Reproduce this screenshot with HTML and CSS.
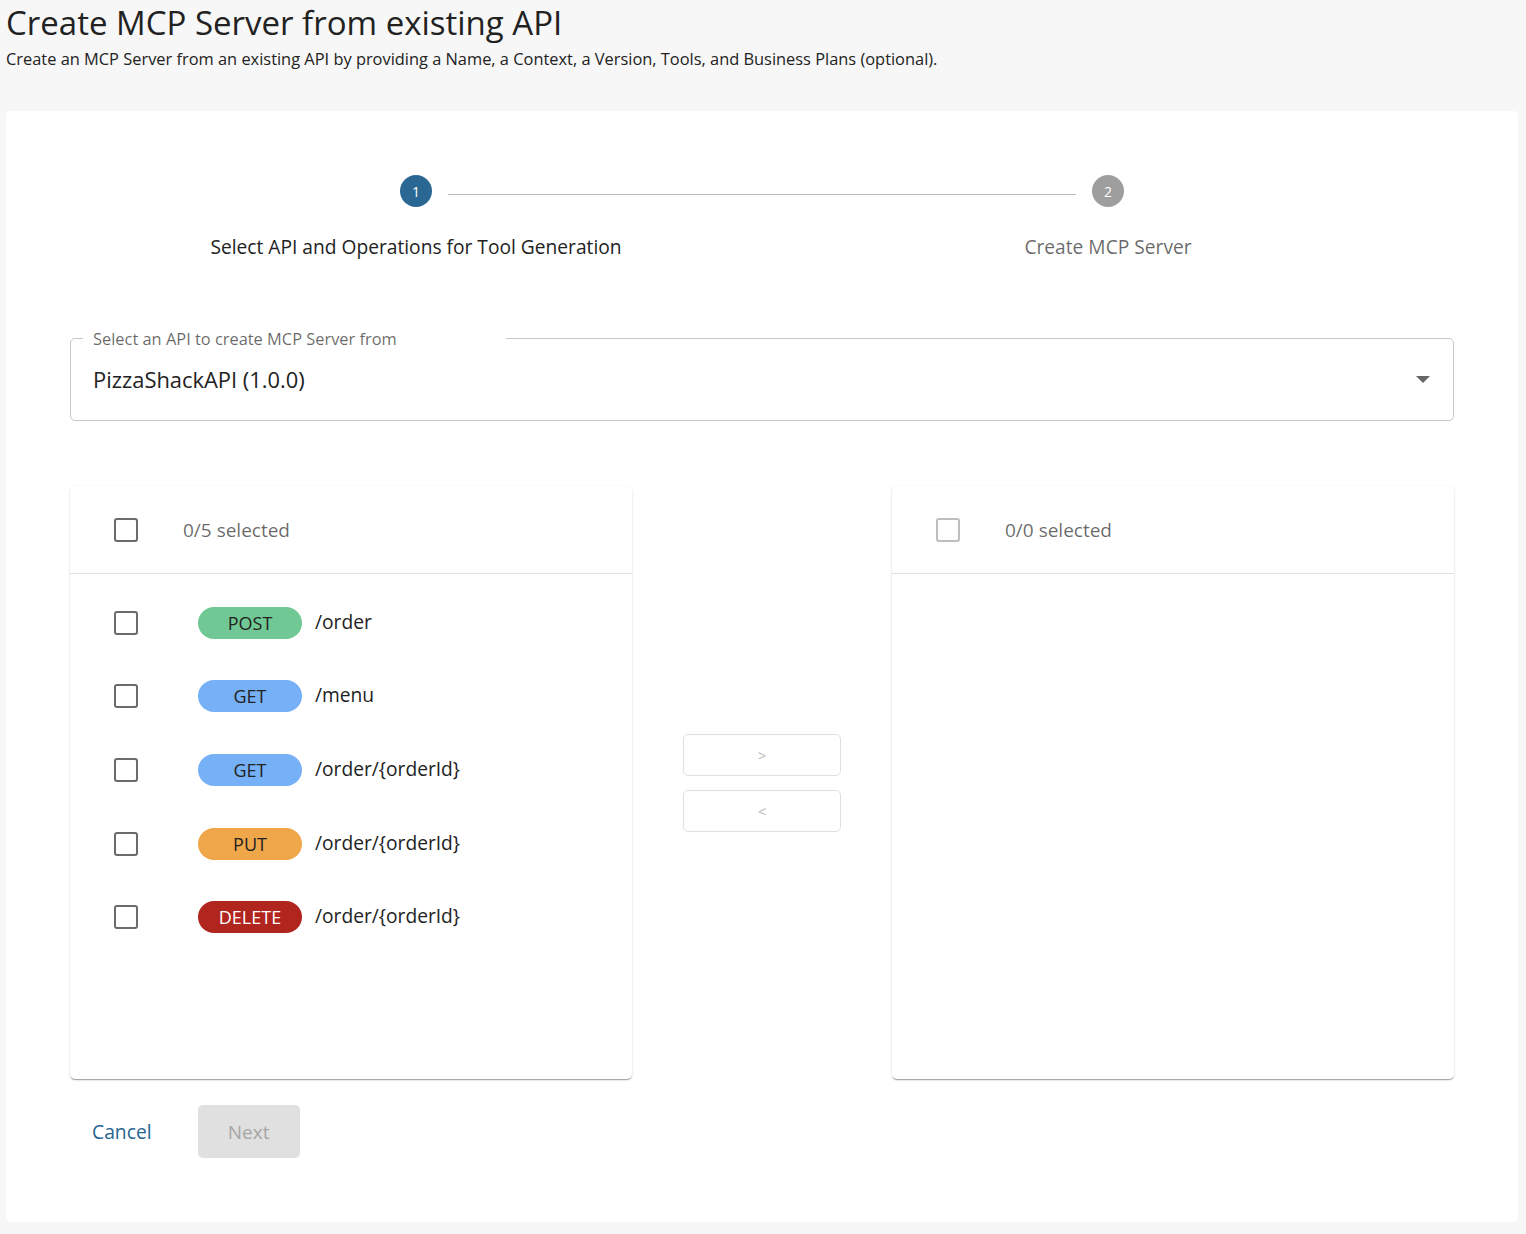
FILE: index.html
```html
<!DOCTYPE html>
<html lang="en">
<head>
<meta charset="utf-8">
<title>Create MCP Server from existing API</title>
<link rel="stylesheet" href="styles.css">
</head>
<body>
<div class="page">
  <header class="page-header">
    <h1 class="title">Create MCP Server from existing API</h1>
    <p class="subtitle">Create an MCP Server from an existing API by providing a Name, a Context, a Version, Tools, and Business Plans (optional).</p>
  </header>

  <main class="card">
    <div class="stepper">
      <div class="step active">
        <div class="step-head">
          <span class="line line-left"></span>
          <span class="step-icon">1</span>
          <span class="line line-right"></span>
        </div>
        <div class="step-label">Select API and Operations for Tool Generation</div>
      </div>
      <div class="step">
        <div class="step-head">
          <span class="line line-left"></span>
          <span class="step-icon">2</span>
          <span class="line line-right hidden"></span>
        </div>
        <div class="step-label">Create MCP Server</div>
      </div>
    </div>

    <div class="select-field">
      <span class="notch"><span class="notch-text">Select an API to create MCP Server from</span></span>
      <span class="select-value">PizzaShackAPI (1.0.0)</span>
      <svg class="select-arrow" viewBox="7 10 10 5" width="14" height="7" aria-hidden="true"><path d="M7 10l5 5 5-5z" fill="#666"/></svg>
    </div>

    <div class="transfer">
      <section class="panel">
        <div class="panel-header">
          <span class="checkbox"></span>
          <span class="count">0/5 selected</span>
        </div>
        <ul class="op-list">
          <li class="op"><span class="checkbox"></span><span class="badge post">POST</span><span class="path">/order</span></li>
          <li class="op"><span class="checkbox"></span><span class="badge get">GET</span><span class="path">/menu</span></li>
          <li class="op"><span class="checkbox"></span><span class="badge get">GET</span><span class="path">/order/{orderId}</span></li>
          <li class="op"><span class="checkbox"></span><span class="badge put">PUT</span><span class="path">/order/{orderId}</span></li>
          <li class="op"><span class="checkbox"></span><span class="badge delete">DELETE</span><span class="path">/order/{orderId}</span></li>
        </ul>
      </section>

      <div class="move-buttons">
        <button class="move-btn" disabled>&gt;</button>
        <button class="move-btn" disabled>&lt;</button>
      </div>

      <section class="panel">
        <div class="panel-header">
          <span class="checkbox disabled"></span>
          <span class="count">0/0 selected</span>
        </div>
        <ul class="op-list"></ul>
      </section>
    </div>

    <div class="actions">
      <button class="btn-text">Cancel</button>
      <button class="btn-next" disabled>Next</button>
    </div>
  </main>
</div>
</body>
</html>
```

FILE: styles.css
```css
* { box-sizing: border-box; }

html, body {
  margin: 0;
  padding: 0;
  background: #f7f7f7;
}

body {
  font-family: "Open Sans", "Noto Sans", "Liberation Sans", sans-serif;
  color: rgba(0, 0, 0, 0.87);
}

.page {
  padding: 0 8px 12px 6px;
}

.title {
  margin: 0;
  font-size: 33px;
  line-height: 45px;
  font-weight: 400;
  color: #222;
}

.subtitle {
  margin: 2px 0 0;
  font-size: 16.4px;
  line-height: 24px;
  color: #222;
}

.card {
  margin-top: 40px;
  background: #fff;
  border-radius: 5px;
  padding: 64px;
}

/* Stepper */
.stepper {
  display: grid;
  grid-template-columns: 1fr 1fr;
}

.step {
  display: flex;
  flex-direction: column;
  align-items: center;
}

.step-head {
  display: flex;
  align-items: center;
  width: 100%;
  height: 32px;
}

.line {
  flex: 1;
  height: 1px;
  background: #bdbdbd;
  margin-top: 6px;
}

.line-left { margin-right: 16px; }
.line-right { margin-left: 16px; }
.step:first-child .line-left { visibility: hidden; }
.line.hidden { visibility: hidden; }

.step-icon {
  width: 32px;
  height: 32px;
  border-radius: 50%;
  background: #9e9e9e;
  color: #fff;
  font-size: 14px;
  display: flex;
  align-items: center;
  justify-content: center;
  flex: none;
}

.step.active .step-icon { background: #2a6893; }

.step-label {
  margin-top: 28px;
  font-size: 19.2px;
  line-height: 24px;
  color: rgba(0, 0, 0, 0.6);
}

.step.active .step-label { color: #222; }

/* Select */
.select-field {
  position: relative;
  margin-top: 79px;
  height: 83px;
  border: 1px solid #c8c8c8;
  border-radius: 5px;
  display: flex;
  align-items: center;
  padding: 0 22px;
}

.notch {
  position: absolute;
  top: -11px;
  left: 12px;
  width: 423px;
  height: 20px;
  background: #fff;
  padding-left: 10px;
}

.notch-text {
  font-size: 16.4px;
  line-height: 20px;
  color: rgba(0, 0, 0, 0.6);
  white-space: nowrap;
}

.select-value {
  flex: 1;
  font-size: 21.9px;
  line-height: 28px;
  color: #222;
}

.select-arrow {
  margin-right: 1px;
}

/* Transfer list */
.transfer {
  margin-top: 65px;
  display: grid;
  grid-template-columns: 1fr 260px 1fr;
  height: 593px;
}

.panel {
  background: #fff;
  border-radius: 5px;
  box-shadow: 0 2px 1px -1px rgba(0,0,0,0.2), 0 1px 1px 0 rgba(0,0,0,0.14), 0 1px 3px 0 rgba(0,0,0,0.12);
  display: flex;
  flex-direction: column;
}

.panel-header {
  height: 88px;
  border-bottom: 1px solid #e0e0e0;
  display: flex;
  align-items: center;
  padding-left: 44px;
}

.checkbox {
  width: 24px;
  height: 24px;
  border: 2px solid #6b6b6b;
  border-radius: 3px;
  flex: none;
}

.checkbox.disabled { border-color: #bdbdbd; }

.count {
  margin-left: 45px;
  font-size: 19px;
  color: rgba(0, 0, 0, 0.6);
}

.op-list {
  list-style: none;
  margin: 0;
  padding: 12px 0 0;
}

.op {
  height: 73.6px;
  display: flex;
  align-items: center;
  padding-left: 44px;
}

.badge {
  margin-left: 60px;
  width: 104px;
  height: 32px;
  border-radius: 16px;
  display: flex;
  align-items: center;
  justify-content: center;
  font-size: 18px;
  color: #222;
  flex: none;
}

.badge.post { background: #70c995; }
.badge.get { background: #76b0f6; }
.badge.put { background: #efa74a; }
.badge.delete { background: #b0251d; color: #fff; }

.path {
  margin-left: 13px;
  margin-top: -3px;
  font-size: 19.2px;
  color: #222;
}

.move-buttons {
  display: flex;
  flex-direction: column;
  align-items: center;
  justify-content: center;
  gap: 14px;
}

.move-btn {
  width: 158px;
  height: 42px;
  background: #fff;
  border: 1px solid #e0e0e0;
  border-radius: 5px;
  color: #bdbdbd;
  font-family: inherit;
  font-size: 15px;
  padding: 0;
}

/* Actions */
.actions {
  margin-top: 26px;
  display: flex;
  align-items: center;
  gap: 24px;
}

.btn-text {
  background: none;
  border: none;
  font-family: inherit;
  font-size: 19.3px;
  color: #276591;
  padding: 0 22px;
  height: 53px;
}

.btn-next {
  width: 102px;
  height: 53px;
  background: #e0e0e0;
  border: none;
  border-radius: 5px;
  font-family: inherit;
  font-size: 19px;
  color: #a6a6a6;
}
```
